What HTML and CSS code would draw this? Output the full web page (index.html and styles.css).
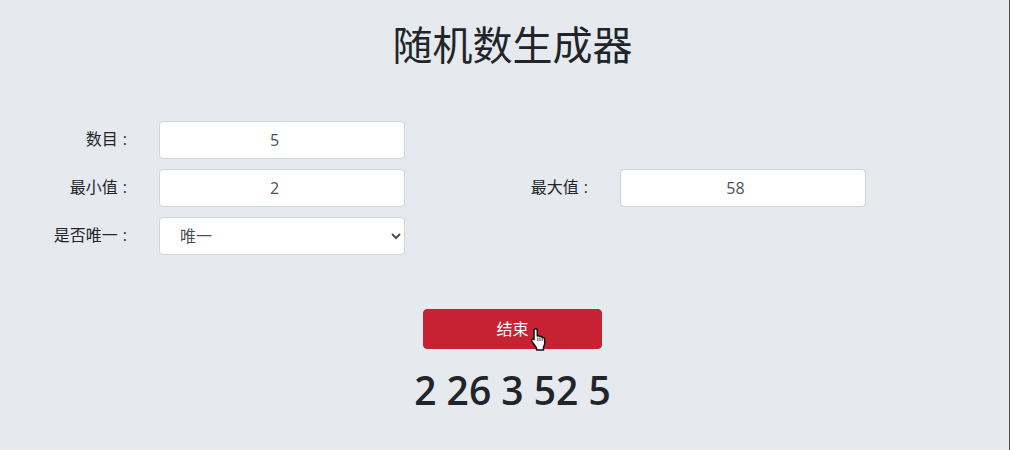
FILE: index.html
```html
<!DOCTYPE html>
<html lang="zh-CN">

<head>
    <meta charset="UTF-8">
    <meta name="viewport" content="width=device-width, initial-scale=1.0">
    <title>随机数生成器</title>
    <link rel="stylesheet" href="styles.css">
</head>

<body>
    <div class="page">
        <h1 class="title">随机数生成器</h1>

        <!-- Settings -->
        <form class="settings">
            <label class="field-label" for="count">数目 :</label>
            <input class="field" id="count" type="number" value="5">
            <span class="blank"></span>

            <label class="field-label" for="min">最小值 :</label>
            <input class="field" id="min" type="number" value="2">
            <label class="field-label" for="max">最大值 :</label>
            <input class="field" id="max" type="number" value="58">

            <label class="field-label" for="unique">是否唯一 :</label>
            <select class="field field-select" id="unique">
                <option>唯一</option>
                <option>不唯一</option>
            </select>
        </form>

        <!-- Action -->
        <div class="actions">
            <button class="stop-button" type="button">结束</button>
            <svg class="cursor" width="15" height="23" viewBox="0 0 15 23">
                <path d="M4.500 .8C5.600 .8 6.300 1.600 6.300 2.600V8C6.900 7.500 8.600 7.600 8.900 8.800C9.500 8.200 11 8.500 11.300 9.700C12 9.300 13.500 9.900 13.600 11L13.800 15C13.800 16.500 13 18 12.500 19V22H5.500V20L1 13.500C.4 12.500 .6 11.500 1.300 11.100C2 10.700 2.700 11.200 3 11.700V2.600C3 1.600 3.600 .8 4.500 .8Z" fill="#fff" stroke="#111" stroke-width="1.500" stroke-linejoin="round"/>
                <path d="M6.800 9.500v3.500M9 10v3M11.200 10.500v2.500" fill="none" stroke="#111" stroke-width=".8"/>
            </svg>
        </div>

        <!-- Result -->
        <h1 class="result">2 26 3 52 5</h1>
    </div>
</body>

</html>
```

FILE: styles.css
```css
body {
    margin: 0;
    overflow: hidden;
    color: #212529;
    font-family: "Open Sans", "Noto Sans CJK SC", sans-serif;
    font-size: 16px;
}

.page {
    width: 1009px;
    height: 429px;
    padding-top: 21px;
    background-color: #e6eaee;
    border-right: 1px solid #4a4d50;
}

.title {
    margin: 0;
    padding-left: 16px;
    text-align: center;
    font-size: 40px;
    font-weight: 400;
    line-height: 48px;
}

/* Settings */
.settings {
    display: grid;
    grid-template-columns: 132px 246px 161px 246px;
    column-gap: 27px;
    row-gap: 10px;
    margin-top: 52px;
}

.blank {
    grid-column: span 2;
}

.field-label {
    align-self: center;
    padding: 0 5px 4px 0;
    text-align: right;
    white-space: nowrap;
    word-spacing: 1px;
}

.field {
    height: 38px;
    padding: 6px 12px;
    box-sizing: border-box;
    background-color: #fff;
    border: 1px solid #ced4da;
    border-radius: 4px;
    color: #495057;
    font-family: inherit;
    font-size: 16px;
    text-align: center;
}

.field-select {
    padding-left: 16px;
    text-align: left;
}

/* Action */
.actions {
    position: relative;
    display: flex;
    justify-content: center;
    margin-top: 54px;
    padding-left: 16px;
}

.stop-button {
    width: 179px;
    height: 40px;
    padding: 0 0 3px;
    background-color: #c72134;
    border: 1px solid #c72134;
    border-radius: 4px;
    color: #fff;
    font-family: inherit;
    font-size: 16px;
}

.cursor {
    position: absolute;
    left: 531px;
    top: 19px;
}

.result {
    margin: 17px 0 0;
    padding-left: 16px;
    text-align: center;
    font-size: 39px;
    font-weight: 600;
    line-height: 48px;
}
```
